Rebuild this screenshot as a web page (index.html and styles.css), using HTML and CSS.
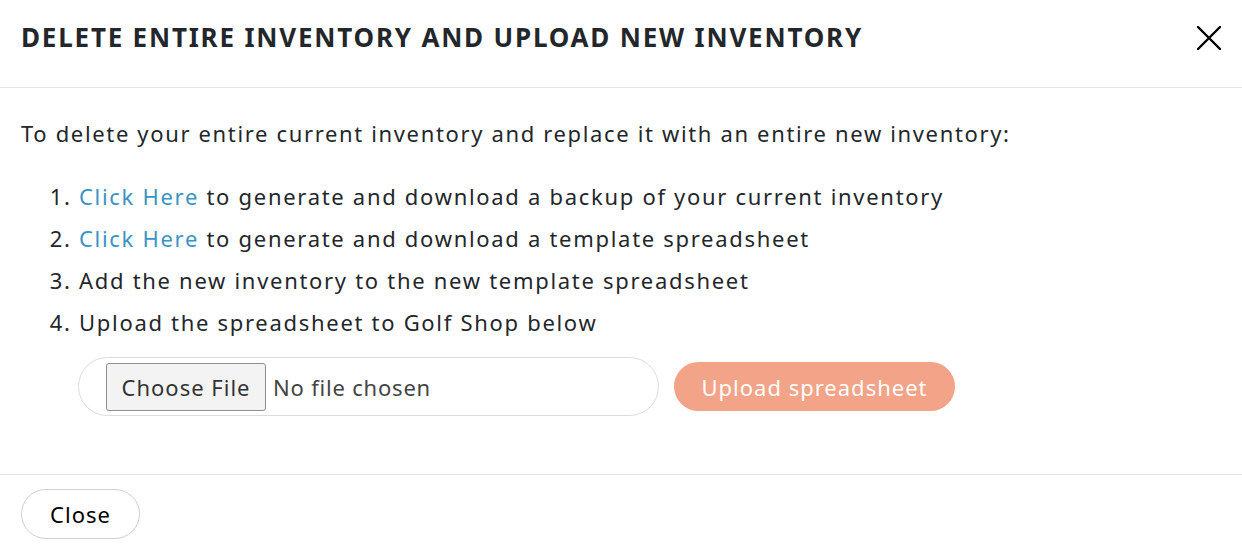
FILE: index.html
```html
<!DOCTYPE html>
<html lang="en">
<head>
<meta charset="utf-8">
<title>Delete entire inventory</title>
<link rel="stylesheet" href="styles.css">
</head>
<body>
<div class="modal">
  <header class="modal-header">
    <h1 class="modal-title">Delete entire inventory and upload new inventory</h1>
    <button class="close-x" aria-label="Close">
      <svg width="24" height="24" viewBox="0 0 24 24"><path d="M1 1 L23 23 M23 1 L1 23" stroke="#000" stroke-width="2.4" stroke-linecap="round" fill="none"/></svg>
    </button>
  </header>
  <section class="modal-body">
    <p class="intro">To delete your entire current inventory and replace it with an entire new inventory:</p>
    <ol class="steps">
      <li><a href="#" class="link">Click Here</a> to generate and download a backup of your current inventory</li>
      <li><a href="#" class="link">Click Here</a> to generate and download a template spreadsheet</li>
      <li>Add the new inventory to the new template spreadsheet</li>
      <li>Upload the spreadsheet to Golf Shop below</li>
    </ol>
    <div class="upload-row">
      <label class="file-pill">
        <span class="file-btn">Choose File</span>
        <span class="file-name">No file chosen</span>
      </label>
      <button class="upload-btn">Upload spreadsheet</button>
    </div>
  </section>
  <footer class="modal-footer">
    <button class="close-btn">Close</button>
  </footer>
</div>
</body>
</html>
```
FILE: styles.css
```css
* { box-sizing: border-box; }
html, body { margin: 0; padding: 0; background: #fff; }
body { font-family: "Noto Sans", "Open Sans", sans-serif; color: #23272b; }

.modal { width: 1242px; }

.modal-header {
  height: 88px;
  border-bottom: 1px solid #e3e3e3;
  display: flex;
  align-items: flex-start;
  justify-content: space-between;
  padding: 21px 21px 0;
}
.modal-title {
  margin: 0;
  font-size: 26px;
  font-weight: 700;
  text-transform: uppercase;
  letter-spacing: 1.8px;
  line-height: 32px;
  color: #23272b;
}
.close-x {
  border: 0; background: none; padding: 0;
  width: 24px; height: 24px; display: flex;
  margin: 5px 0 0 0;
}

.modal-body {
  padding: 30px 21px 58px;
  border-bottom: 1px solid #e3e3e3;
}
.intro {
  margin: 0;
  font-size: 22px;
  line-height: 30px;
  letter-spacing: 1.65px;
}
.steps {
  margin: 27px 0 0;
  padding-left: 58px;
  font-size: 22px;
  letter-spacing: 1.7px;
}
.steps li { line-height: 42px; }
.link { color: #3a94c4; text-decoration: none; }

.upload-row {
  margin: 14px 0 0 57px;
  display: flex;
  align-items: center;
  gap: 15px;
}
.file-pill {
  width: 581px;
  height: 59px;
  border: 1px solid #dcdcdc;
  border-radius: 30px;
  display: flex;
  align-items: center;
  padding-left: 27px;
  gap: 7px;
}
.file-btn {
  width: 160px;
  height: 48px;
  border: 1px solid #8e8e8e;
  border-radius: 3px;
  background: #f3f3f3;
  display: flex; align-items: center; justify-content: center;
  font-size: 22px;
  letter-spacing: 1px;
  color: #333;
}
.file-name { font-size: 22px; letter-spacing: 0.8px; color: #444; }

.upload-btn {
  width: 281px;
  height: 49px;
  border: 0;
  border-radius: 25px;
  background: #f3a388;
  color: #fff;
  font-family: inherit;
  font-size: 22px;
  letter-spacing: 1px;
}

.modal-footer { padding: 14px 21px; }
.close-btn {
  width: 119px;
  height: 50px;
  border: 1px solid #cfcfcf;
  border-radius: 25px;
  background: #fff;
  font-family: inherit;
  font-size: 22px;
  letter-spacing: 1px;
  color: #000;
}
```
